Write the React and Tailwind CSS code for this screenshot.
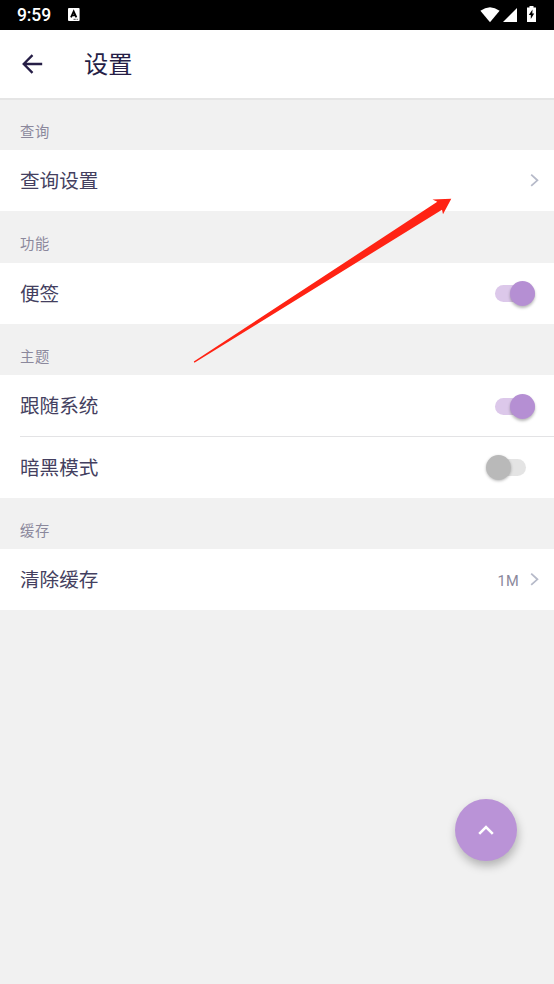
import React from 'react';

function StatusBar() {
    return (
        <div className="h-[29.5px] bg-black flex items-center pl-[17px] pr-[18px] text-white">
            <span className="font-[Roboto] text-[17.5px] leading-none font-medium tracking-[-0.1px] mt-[2px]">9:59</span>
            <svg className="ml-[17px]" width="12" height="13" viewBox="0 0 12 13">
                <rect width="11.6" height="13" rx="1" fill="#fff" />
                <path d="M3 9.3 5.7 3.4 8.4 9.3M4 7.3h3.4" fill="none" stroke="#000" strokeWidth="1.8" />
                <path d="M5.5 11.3h2.2M8.6 11.3h1.2" stroke="#000" strokeWidth="0.7" />
            </svg>
            <div className="ml-auto flex items-center">
                <svg width="20" height="16" viewBox="0 0 20 16">
                    <path d="M.4 3.8Q10-3.2 19.6 3.8L10 15.2z" fill="#fff" />
                </svg>
                <svg className="ml-[3px]" width="14" height="14" viewBox="0 0 14 14">
                    <path d="M14 0v14H0z" fill="#fff" />
                </svg>
                <svg className="ml-[10px] -mt-px" width="9" height="16" viewBox="0 0 9 16">
                    <path d="M2.5 0h4v1.5H9V16H0V1.5h2.5z" fill="#fff" />
                    <path d="M5.5 3.5 1.8 9h2v4L7.2 7.6H5.3z" fill="#000" />
                </svg>
            </div>
        </div>
    );
}

function Header() {
    return (
        <header className="h-[70.5px] bg-white border-b-2 border-[#e5e5e5] flex items-center pl-[22px]">
            <svg width="21" height="20" viewBox="0 0 21 20" fill="none" stroke="#261e46" strokeWidth="2.3">
                <path d="M20.2 10H2M10.5 1.1 1.7 10l8.8 8.9" />
            </svg>
            <h1 className="ml-[41px] -mt-px text-[24.3px] leading-none text-[#261e46]">设置</h1>
        </header>
    );
}

function Section({ title, children }) {
    return (
        <section>
            <h2 className="h-[51.5px] pl-5 pt-[13px] flex items-center text-[14.3px] leading-none tracking-[0.8px] text-[#8b889c]">{title}</h2>
            <div className="bg-white">{children}</div>
        </section>
    );
}

function Row({ label, children }) {
    return (
        <div className="h-[61px] pl-5 flex items-center text-[#443f60]">
            <span className="-mt-px text-[19.6px] leading-none">{label}</span>
            <div className="ml-auto flex items-center">{children}</div>
        </div>
    );
}

function Chevron() {
    return (
        <svg className="mr-[15px]" width="9" height="13" viewBox="0 0 9 13" fill="none" stroke="#b6bac9" strokeWidth="1.8">
            <path d="M1.2.7 7.4 6.3l-6.2 5.6" />
        </svg>
    );
}

function Toggle({ on }) {
    if (on) {
        return (
            <div className="mr-[19px] mt-px w-10 h-[17px] rounded-full bg-[#dcc8ea] flex items-center justify-end">
                <div className="w-[25px] h-[25px] shrink-0 rounded-full bg-[#b58fd3] shadow-[0_2px_3px_rgba(0,0,0,0.28)]"></div>
            </div>
        );
    }
    return (
        <div className="mr-[28px] mt-px w-[40.5px] h-[17px] rounded-full bg-[linear-gradient(to_right,transparent_12px,#e4e4e4_12px)] flex items-center">
            <div className="w-[25px] h-[25px] shrink-0 rounded-full bg-[#b9b9b9] shadow-[0_1px_3px_rgba(0,0,0,0.28)]"></div>
        </div>
    );
}

export default function App() {
    return (
        <div className="relative w-full h-[984px] overflow-hidden bg-[#f1f1f1] font-['Noto_Sans_CJK_SC',sans-serif]">
            <StatusBar />
            <Header />
            <main className="-mt-[1.5px]">
                <Section title="查询">
                    <Row label="查询设置"><Chevron /></Row>
                </Section>
                <Section title="功能">
                    <Row label="便签"><Toggle on /></Row>
                </Section>
                <Section title="主题">
                    <Row label="跟随系统"><Toggle on /></Row>
                    <div className="ml-5 -mb-[0.5px] h-px bg-[#e3e3e5]"></div>
                    <Row label="暗黑模式"><Toggle /></Row>
                </Section>
                <Section title="缓存">
                    <Row label="清除缓存">
                        <span className="mr-[11px] mt-[3px] font-[Roboto] text-[14.6px] leading-none tracking-[0.3px] text-[#8b889c]">1M</span>
                        <Chevron />
                    </Row>
                </Section>
            </main>
            <button className="absolute left-[455px] top-[799px] w-[62px] h-[62px] rounded-full bg-[#ba93d7] flex items-center justify-center shadow-[1px_5px_10px_rgba(0,0,0,0.26)]">
                <svg width="16" height="10" viewBox="0 0 16 10" fill="none" stroke="#fff" strokeWidth="2.6">
                    <path d="M1.2 8.8 8 2l6.8 6.8" />
                </svg>
            </button>
            <svg className="absolute left-[190px] top-[195px]" width="266" height="172" viewBox="190 195 266 172">
                <path d="M193.8 361.6 437.3 201.8 432.5 199.4 451.3 198.7 443 214.3 442 209.8 194.4 362.7z" fill="#ff2314" />
            </svg>
        </div>
    );
}
